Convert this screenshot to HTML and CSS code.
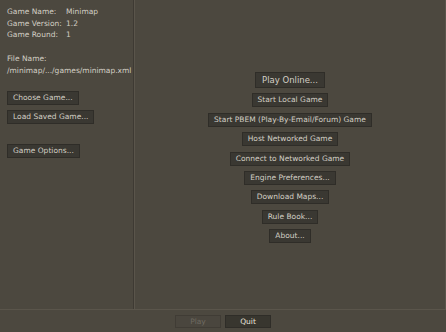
FILE: index.html
```html
<!DOCTYPE html>
<html lang="en">
  <head>
    <meta charset="UTF-8" />
    <title>TripleA</title>
    <link rel="stylesheet" href="styles.css">
  </head>
  <body>
    <div class="main">
      <div class="game-info">
        <div class="details">
          <span>Game Name:</span><span>Minimap</span>
          <span>Game Version:</span><span>1.2</span>
          <span>Game Round:</span><span>1</span>
        </div>
        <div class="file-label">File Name:</div>
        <div class="file-path">/minimap/.../games/minimap.xml</div>
        <div class="side-buttons">
          <button>Choose Game...</button>
          <button>Load Saved Game...</button>
        </div>
        <div class="side-buttons options">
          <button>Game Options...</button>
        </div>
      </div>
      <div class="menu">
        <button class="big">Play Online...</button>
        <button>Start Local Game</button>
        <button>Start PBEM (Play-By-Email/Forum) Game</button>
        <button>Host Networked Game</button>
        <button>Connect to Networked Game</button>
        <button>Engine Preferences...</button>
        <button>Download Maps...</button>
        <button>Rule Book...</button>
        <button>About...</button>
      </div>
    </div>
    <div class="footer">
      <button class="play" disabled>Play</button>
      <button class="quit">Quit</button>
    </div>
  </body>
</html>
```

FILE: styles.css
```css
body {
  margin: 0;
  width: 446px;
  height: 332px;
  background-color: #4c483f;
  color: #d3cfc5;
  font-family: "DejaVu Sans", sans-serif;
  font-size: 7.5px;
  overflow: hidden;
}

button {
  font-family: inherit;
  font-size: 7.5px;
  color: #d3cfc5;
  background-color: #3a3832;
  border: 1px solid #2f2d28;
  height: 14px;
  padding: 0 5px;
  line-height: 12px;
}

.main {
  display: flex;
  height: 310px;
  border-bottom: 1px solid #5a554b;
  box-sizing: border-box;
}

.game-info {
  width: 135px;
  box-sizing: border-box;
  padding: 6px 0 0 7px;
  line-height: 11.5px;
  border-right: 1px solid #5a554b;
  box-shadow: inset -1px 0 0 #3e3a33;
}

.details {
  display: grid;
  grid-template-columns: 59px auto;
}

.file-label {
  margin-top: 12.5px;
}

.side-buttons {
  display: flex;
  flex-direction: column;
  align-items: flex-start;
  gap: 5px;
  margin-top: 15px;
}

.side-buttons.options {
  margin-top: 20px;
}

.menu {
  flex: 1;
  display: flex;
  flex-direction: column;
  align-items: center;
  justify-content: center;
  gap: 5.4px;
  padding-top: 6px;
  border-right: 1px solid #5a554b;
}

.menu .big {
  height: 16px;
  font-size: 8.5px;
  padding: 0 6px;
}

.footer {
  display: flex;
  justify-content: center;
  gap: 4px;
  padding-top: 5px;
}

.footer button {
  width: 46px;
  height: 13px;
}

.footer .play {
  background-color: #4a463e;
  color: #6e6a61;
  border-color: #403c35;
}

.footer .quit {
  background-color: #38362f;
  color: #e8e4dc;
}
```
